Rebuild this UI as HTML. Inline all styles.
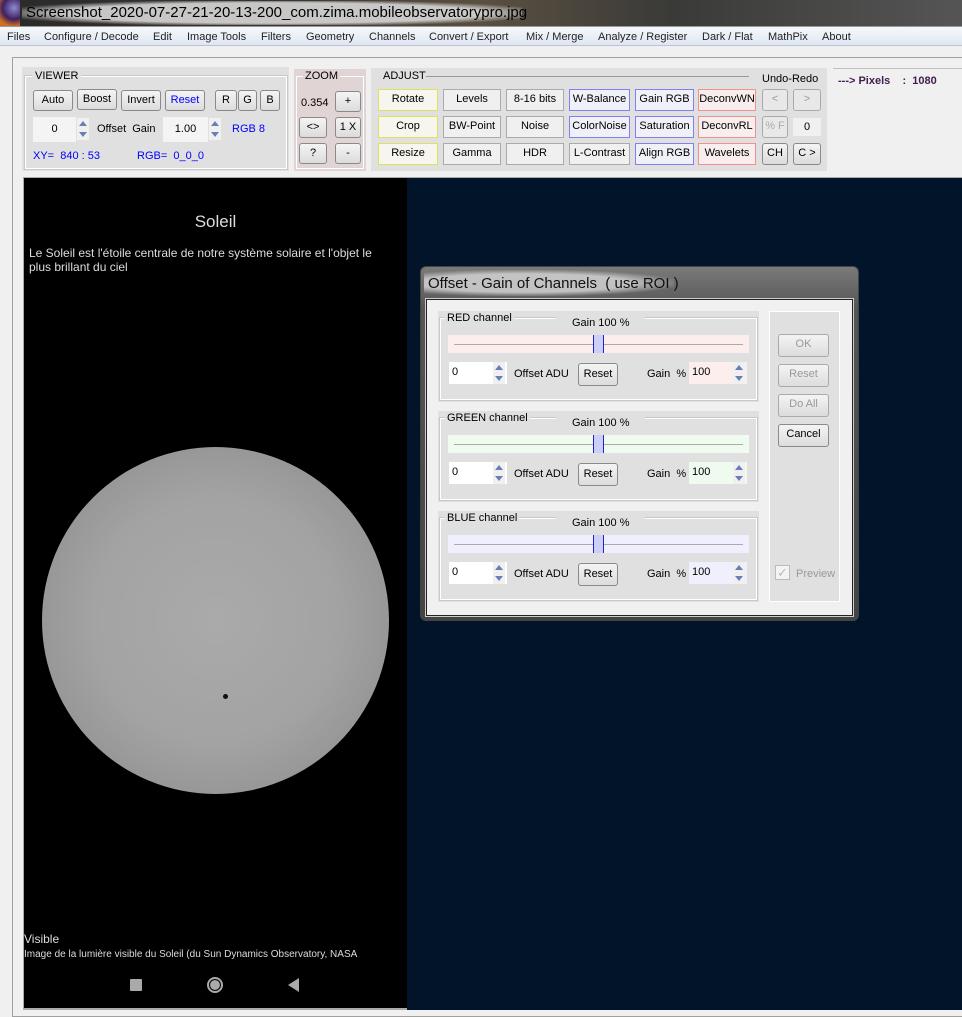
<!DOCTYPE html>
<html><head><meta charset="utf-8">
<style>
*{margin:0;padding:0;box-sizing:border-box}
body{width:962px;height:1010px;overflow:hidden;background:#f0f0f0;font-family:"Liberation Sans",sans-serif;font-size:11px;color:#000;position:relative}
.a{position:absolute}
.btn{position:absolute;border:1px solid #8a8a8a;border-radius:3px;background:linear-gradient(#f4f4f4,#dcdcdc);text-align:center;font-size:11px;line-height:19px;color:#000}
.fl{position:absolute;border:1px solid #aaa;text-align:center;font-size:11px;line-height:19px}
.grp{position:absolute;border:1px solid #fff;outline:1px solid #c8c8c8}
.spin{position:absolute;width:12px;background:#f0f0f0}
.spin:before,.spin:after{content:"";position:absolute;left:2px;border-left:4px solid transparent;border-right:4px solid transparent}
.spin:before{top:3px;border-bottom:5px solid #6a7fb8}
.spin:after{bottom:3px;border-top:5px solid #6a7fb8}
.fld{position:absolute;background:#fff;border:1px solid #e0e0e0;font-size:11px;padding-left:3px;line-height:21px}
</style></head><body>
<div class="a" style="left:0;top:0;width:962px;height:26px;background:linear-gradient(90deg,#2a2a2a,#3a3530 30%,#5a5040 50%,#3a3a38 70%,#555 100%)"></div>
<div class="a" style="left:0;top:0;width:20px;height:26px;background:radial-gradient(circle at 14px 8px,#8a8ad0,#402060 50%,#d07020 80%)"></div>
<div class="a" style="left:22px;top:1px;width:500px;height:24px;background:radial-gradient(ellipse at 50% 50%,rgba(215,215,215,.9) 60%,rgba(180,180,180,0) 80%)"></div>
<div class="a" style="left:26px;top:4px;font-size:15px;color:#000;line-height:18px">Screenshot_2020-07-27-21-20-13-200_com.zima.mobileobservatorypro.jpg</div>
<div class="a" style="left:0;top:26px;width:962px;height:20px;background:linear-gradient(#f6f8fb,#dfe7f2);border-top:1px solid #999;border-bottom:1px solid #b9c4d4;font-size:11px;color:#222;line-height:20px">
<span class="a" style="left:7px">Files</span><span class="a" style="left:44px">Configure / Decode</span><span class="a" style="left:153px">Edit</span><span class="a" style="left:187px">Image Tools</span><span class="a" style="left:261px">Filters</span><span class="a" style="left:306px">Geometry</span><span class="a" style="left:369px">Channels</span><span class="a" style="left:429px">Convert / Export</span><span class="a" style="left:526px">Mix / Merge</span><span class="a" style="left:598px">Analyze / Register</span><span class="a" style="left:702px">Dark / Flat</span><span class="a" style="left:768px">MathPix</span><span class="a" style="left:822px">About</span></div>
<div class="a" style="left:12px;top:57px;width:960px;height:960px;border:1px solid #a0a0a0;border-right:none;background:#f0f0f0"></div>
<div class="a" style="left:22px;top:67px;width:267px;height:104px;background:#e0e0e0"></div>
<div class="grp" style="left:25px;top:76px;width:262px;height:93px"></div>
<div class="a" style="left:32px;top:70px;background:#e0e0e0;padding:0 3px;font-size:11px">VIEWER</div>
<div class="btn" style="left:33px;top:90px;width:40px;height:21px">Auto</div>
<div class="btn" style="left:77px;top:89px;width:40px;height:21px">Boost</div>
<div class="btn" style="left:121px;top:90px;width:40px;height:21px">Invert</div>
<div class="btn" style="left:165px;top:90px;width:40px;height:21px;color:#00f">Reset</div>
<div class="btn" style="left:215px;top:90px;width:22px;height:21px">R</div>
<div class="btn" style="left:238px;top:90px;width:19px;height:21px">G</div>
<div class="btn" style="left:260px;top:90px;width:20px;height:21px">B</div>
<div class="a" style="left:33px;top:117px;width:43px;height:25px;background:#f4f4f4;text-align:center;line-height:25px">0</div>
<div class="spin" style="left:77px;top:118px;height:22px"></div>
<div class="a" style="left:97px;top:123px">Offset&nbsp; Gain</div>
<div class="a" style="left:163px;top:117px;width:45px;height:25px;background:#f4f4f4;text-align:center;line-height:25px">1.00</div>
<div class="spin" style="left:209px;top:118px;height:22px"></div>
<div class="a" style="left:232px;top:123px;color:#00f">RGB 8</div>
<div class="a" style="left:33px;top:150px;color:#00f">XY=&nbsp; 840 : 53</div>
<div class="a" style="left:137px;top:150px;color:#00f">RGB=&nbsp; 0_0_0</div>
<div class="a" style="left:294px;top:69px;width:72px;height:102px;background:#e0d4d4"></div>
<div class="grp" style="left:296px;top:76px;width:68px;height:93px;outline:none;border-color:#fff"></div>
<div class="a" style="left:303px;top:70px;background:#e0d4d4;padding:0 2px">ZOOM</div>
<div class="a" style="left:301px;top:97px">0.354</div>
<div class="btn" style="left:335px;top:91px;width:26px;height:21px">+</div>
<div class="btn" style="left:299px;top:117px;width:28px;height:21px">&lt;&gt;</div>
<div class="btn" style="left:335px;top:117px;width:26px;height:21px">1 X</div>
<div class="btn" style="left:299px;top:143px;width:28px;height:21px">?</div>
<div class="btn" style="left:335px;top:143px;width:26px;height:21px">-</div>
<div class="a" style="left:371px;top:68px;width:456px;height:103px;background:#e0e0e0"></div>
<div class="a" style="left:426px;top:76px;width:323px;border-top:1px solid #999"></div>
<div class="a" style="left:383px;top:70px">ADJUST</div>
<div class="a" style="left:762px;top:73px">Undo-Redo</div>
<div class="fl" style="left:378px;top:89px;width:60px;height:22px;border-color:#e0e060;background:#f6f6ee">Rotate</div>
<div class="fl" style="left:378px;top:116px;width:60px;height:22px;border-color:#e0e060;background:#f6f6ee">Crop</div>
<div class="fl" style="left:378px;top:143px;width:60px;height:22px;border-color:#e0e060;background:#f6f6ee">Resize</div>
<div class="fl" style="left:443px;top:89px;width:58px;height:22px;background:#f0f0f0">Levels</div>
<div class="fl" style="left:443px;top:116px;width:58px;height:22px;background:#f0f0f0">BW-Point</div>
<div class="fl" style="left:443px;top:143px;width:58px;height:22px;background:#f0f0f0">Gamma</div>
<div class="fl" style="left:506px;top:89px;width:58px;height:22px;background:#f0f0f0">8-16 bits</div>
<div class="fl" style="left:506px;top:116px;width:58px;height:22px;background:#f0f0f0">Noise</div>
<div class="fl" style="left:506px;top:143px;width:58px;height:22px;background:#f0f0f0">HDR</div>
<div class="fl" style="left:569px;top:89px;width:61px;height:22px;border-color:#8080f0;background:#f0f0f8">W-Balance</div>
<div class="fl" style="left:569px;top:116px;width:61px;height:22px;border-color:#8080f0;background:#f0f0f8">ColorNoise</div>
<div class="fl" style="left:569px;top:143px;width:61px;height:22px;background:#f0f0f0">L-Contrast</div>
<div class="fl" style="left:635px;top:89px;width:59px;height:22px;border-color:#8080f0;background:#f0f0f8">Gain RGB</div>
<div class="fl" style="left:635px;top:116px;width:59px;height:22px;border-color:#8080f0;background:#f0f0f8">Saturation</div>
<div class="fl" style="left:635px;top:143px;width:59px;height:22px;border-color:#8080f0;background:#f0f0f8">Align RGB</div>
<div class="fl" style="left:698px;top:89px;width:58px;height:22px;border-color:#f09090;background:#f8eeee">DeconvWN</div>
<div class="fl" style="left:698px;top:116px;width:58px;height:22px;border-color:#f09090;background:#f8eeee">DeconvRL</div>
<div class="fl" style="left:698px;top:143px;width:58px;height:22px;border-color:#f09090;background:#f8eeee">Wavelets</div>
<div class="btn" style="left:762px;top:89px;width:26px;height:22px;color:#999;background:#e8e8e8;border-color:#aaa">&lt;</div>
<div class="btn" style="left:793px;top:89px;width:28px;height:22px;color:#999;background:#e8e8e8;border-color:#aaa">&gt;</div>
<div class="btn" style="left:762px;top:116px;width:26px;height:22px;color:#aaa;background:#e8e8e8;border-color:#aaa">% F</div>
<div class="a" style="left:793px;top:118px;width:28px;height:18px;background:#f0f0f0;text-align:center;line-height:18px">0</div>
<div class="btn" style="left:762px;top:143px;width:26px;height:22px">CH</div>
<div class="btn" style="left:793px;top:143px;width:28px;height:22px">C &gt;</div>
<div class="a" style="left:838px;top:75px;font-weight:bold;color:#402050">---&gt; Pixels&nbsp;&nbsp;&nbsp;&nbsp;:&nbsp; 1080</div>
<div class="a" style="left:833px;top:68px;width:129px;border-top:1px solid #c0c0c0"></div>
<div class="a" style="left:23px;top:177px;width:939px;height:833px;background:#aaa"></div>
<div class="a" style="left:24px;top:178px;width:383px;height:830px;background:#000"></div>
<div class="a" style="left:407px;top:178px;width:555px;height:832px;background:#021429"></div>
<div class="a" style="left:24px;top:212px;width:383px;text-align:center;color:#ddd;font-size:17px">Soleil</div>
<div class="a" style="left:29px;top:246px;width:375px;color:#ddd;font-size:12px;line-height:14px">Le Soleil est l'étoile centrale de notre système solaire et l'objet le<br>plus brillant du ciel</div>
<div class="a" style="left:42px;top:447px;width:347px;height:347px;border-radius:50%;background:radial-gradient(circle,#aaaaaa 0%,#a3a3a3 50%,#959595 75%,#7a7a7a 92%,#555 100%)"></div>
<div class="a" style="left:223px;top:694px;width:5px;height:5px;border-radius:50%;background:#111"></div>
<div class="a" style="left:24px;top:932px;color:#ddd;font-size:12px">Visible</div>
<div class="a" style="left:24px;top:949px;color:#ddd;font-size:10px">Image de la lumière visible du Soleil (du Sun Dynamics Observatory, NASA</div>
<div class="a" style="left:130px;top:979px;width:12px;height:12px;background:#aaa;border-radius:1px"></div>
<div class="a" style="left:207px;top:977px;width:16px;height:16px;border-radius:50%;border:2px solid #aaa;background:radial-gradient(circle,#aaa 55%,#000 60%)"></div>
<div class="a" style="left:288px;top:978px;width:0;height:0;border-top:7px solid transparent;border-bottom:7px solid transparent;border-right:11px solid #aaa"></div>
<div class="a" style="left:420px;top:266px;width:439px;height:355px;border-radius:6px;border:1px solid #444;background:linear-gradient(#7a7a7a,#555 12%,#444 100%)"></div>
<div class="a" style="left:424px;top:270px;width:250px;height:26px;background:radial-gradient(ellipse at 40% 50%,rgba(210,210,210,.85) 50%,rgba(150,150,150,0) 75%)"></div>
<div class="a" style="left:428px;top:275px;font-size:15px;color:#111">Offset - Gain of Channels&nbsp; ( use ROI )</div>
<div class="a" style="left:426px;top:299px;width:427px;height:317px;background:#f0f0f0;border:1px solid #222;outline:1px solid #ccc"></div>
<div class="a" style="left:438px;top:311px;width:321px;height:91px;background:#e0e0e0"></div>
<div class="a" style="left:438px;top:411px;width:321px;height:91px;background:#e0e0e0"></div>
<div class="a" style="left:438px;top:511px;width:321px;height:91px;background:#e0e0e0"></div>
<div class="a" style="left:769px;top:311px;width:71px;height:291px;background:#e0e0e0;border:1px solid #fff"></div>
<div class="btn" style="left:778px;top:334px;width:51px;height:23px;color:#999;border-color:#aaa">OK</div>
<div class="btn" style="left:778px;top:364px;width:51px;height:23px;color:#999;border-color:#aaa">Reset</div>
<div class="btn" style="left:778px;top:394px;width:51px;height:23px;color:#999;border-color:#aaa">Do All</div>
<div class="btn" style="left:778px;top:424px;width:51px;height:23px">Cancel</div>
<div class="a" style="left:775px;top:565px;width:15px;height:15px;border:1px solid #bbb;background:#f4f4f4;color:#bbb;font-size:13px;line-height:13px;text-align:center">✓</div>
<div class="a" style="left:796px;top:568px;color:#999">Preview</div>
<div class="grp" style="left:440px;top:318px;width:317px;height:82px"></div>
<div class="a" style="left:445px;top:312px;background:#e0e0e0;padding:0 2px">RED channel</div>
<div class="a" style="left:556px;top:317px;background:#e0e0e0;padding:0 16px">Gain 100 %</div>
<div class="a" style="left:448px;top:335px;width:301px;height:18px;background:#fdeeee"></div>
<div class="a" style="left:454px;top:344px;width:289px;border-top:1px solid #aaa"></div>
<div class="a" style="left:593px;top:335px;width:11px;height:18px;background:#ccd0f8;border-left:1px solid #22c;border-right:1px solid #22c"></div>
<div class="fld" style="left:448px;top:361px;width:60px;height:24px">0</div>
<div class="spin" style="left:493px;top:362px;height:22px"></div>
<div class="a" style="left:514px;top:368px">Offset ADU</div>
<div class="btn" style="left:578px;top:363px;width:40px;height:23px;line-height:21px">Reset</div>
<div class="a" style="left:647px;top:368px">Gain&nbsp; %</div>
<div class="fld" style="left:688px;top:361px;width:60px;height:24px;background:#fdeeee">100</div>
<div class="spin" style="left:733px;top:362px;height:22px"></div>
<div class="grp" style="left:440px;top:418px;width:317px;height:82px"></div>
<div class="a" style="left:445px;top:412px;background:#e0e0e0;padding:0 2px">GREEN channel</div>
<div class="a" style="left:556px;top:417px;background:#e0e0e0;padding:0 16px">Gain 100 %</div>
<div class="a" style="left:448px;top:435px;width:301px;height:18px;background:#eefbee"></div>
<div class="a" style="left:454px;top:444px;width:289px;border-top:1px solid #aaa"></div>
<div class="a" style="left:593px;top:435px;width:11px;height:18px;background:#ccd0f8;border-left:1px solid #22c;border-right:1px solid #22c"></div>
<div class="fld" style="left:448px;top:461px;width:60px;height:24px">0</div>
<div class="spin" style="left:493px;top:462px;height:22px"></div>
<div class="a" style="left:514px;top:468px">Offset ADU</div>
<div class="btn" style="left:578px;top:463px;width:40px;height:23px;line-height:21px">Reset</div>
<div class="a" style="left:647px;top:468px">Gain&nbsp; %</div>
<div class="fld" style="left:688px;top:461px;width:60px;height:24px;background:#eefbee">100</div>
<div class="spin" style="left:733px;top:462px;height:22px"></div>
<div class="grp" style="left:440px;top:518px;width:317px;height:82px"></div>
<div class="a" style="left:445px;top:512px;background:#e0e0e0;padding:0 2px">BLUE channel</div>
<div class="a" style="left:556px;top:517px;background:#e0e0e0;padding:0 16px">Gain 100 %</div>
<div class="a" style="left:448px;top:535px;width:301px;height:18px;background:#efeffd"></div>
<div class="a" style="left:454px;top:544px;width:289px;border-top:1px solid #aaa"></div>
<div class="a" style="left:593px;top:535px;width:11px;height:18px;background:#ccd0f8;border-left:1px solid #22c;border-right:1px solid #22c"></div>
<div class="fld" style="left:448px;top:561px;width:60px;height:24px">0</div>
<div class="spin" style="left:493px;top:562px;height:22px"></div>
<div class="a" style="left:514px;top:568px">Offset ADU</div>
<div class="btn" style="left:578px;top:563px;width:40px;height:23px;line-height:21px">Reset</div>
<div class="a" style="left:647px;top:568px">Gain&nbsp; %</div>
<div class="fld" style="left:688px;top:561px;width:60px;height:24px;background:#efeffd">100</div>
<div class="spin" style="left:733px;top:562px;height:22px"></div>
</body></html>
